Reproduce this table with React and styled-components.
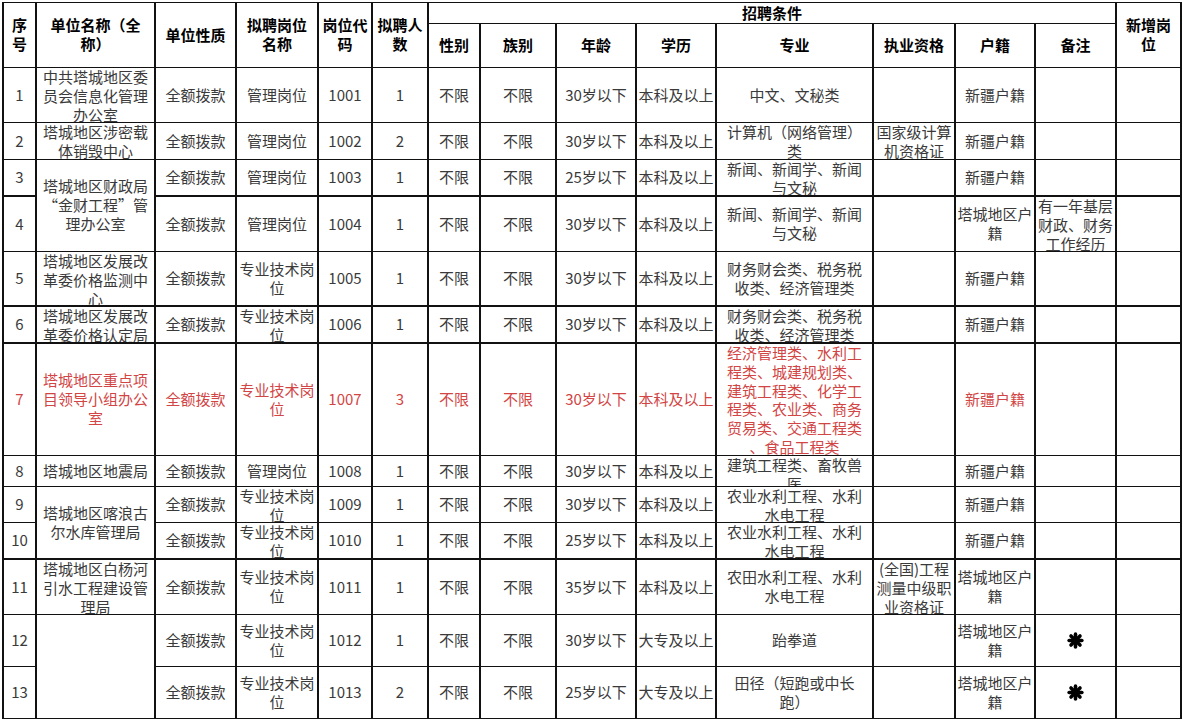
import React from 'react';
import styled, { createGlobalStyle } from 'styled-components';

const GlobalStyle = createGlobalStyle`
    html, body {
        margin: 0;
        padding: 0;
        background: #fff;
    }
    body {
        font-family: "Noto Sans CJK SC", "Liberation Sans", sans-serif;
    }
`;

const COLS = [33, 119, 81, 82, 54, 56, 52, 76, 80, 80, 157, 82, 80, 81, 65];
const ROWS = [21, 44, 55, 37, 37, 55, 55, 37, 112, 31, 36, 37, 55, 52, 52];

const Page = styled.div`
    padding: 2px 0 0 2px;
    width: 1183px;
    height: 721px;
    box-sizing: border-box;
    overflow: hidden;
`;

const Sheet = styled.div`
    display: grid;
    grid-template-columns: ${COLS.map((w) => `${w}px`).join(' ')};
    grid-template-rows: ${ROWS.map((h) => `${h}px`).join(' ')};
    width: max-content;
    border-top: 1px solid #111;
    border-left: 2px solid #111;
`;

const Cell = styled.div`
    grid-column: span ${(p) => p.$span || 1};
    grid-row: span ${(p) => p.$rows || 1};
    box-sizing: border-box;
    border-right: 2px solid #111;
    border-bottom: ${(p) => (p.$thick ? 2 : 1)}px solid #111;
    overflow: hidden;
    display: flex;
    justify-content: center;
    align-items: center;
    align-items: safe center;
    font-size: 15px;
    line-height: 18.8px;
    font-weight: ${(p) => (p.$head ? 700 : 400)};
    color: ${(p) => (p.$head ? '#000' : p.$red ? '#d24545' : '#3a3a3a')};
`;

const Text = styled.span`
    display: block;
    white-space: pre;
    text-align: center;
`;

const Star = styled.svg`
    width: 17px;
    height: 17px;
    display: block;
`;

const Asterisk = () => (
    <Star viewBox="0 0 20 20">
        <g stroke="#000" strokeWidth="4.2" strokeLinecap="round">
            <line x1="10" y1="2.5" x2="10" y2="17.5" />
            <line x1="2.5" y1="10" x2="17.5" y2="10" />
            <line x1="4.7" y1="4.7" x2="15.3" y2="15.3" />
            <line x1="15.3" y1="4.7" x2="4.7" y2="15.3" />
        </g>
    </Star>
);

const head = [
    { t: '序\n号', rows: 2 },
    { t: '单位名称（全\n称）', rows: 2 },
    { t: '单位性质', rows: 2 },
    { t: '拟聘岗位\n名称', rows: 2 },
    { t: '岗位代\n码', rows: 2 },
    { t: '拟聘人\n数', rows: 2 },
    { t: '招聘条件', span: 8 },
    { t: '新增岗\n位', rows: 2 },
    { t: '性别' },
    { t: '族别' },
    { t: '年龄' },
    { t: '学历' },
    { t: '专业' },
    { t: '执业资格' },
    { t: '户籍' },
    { t: '备注' },
];

const STAR = { star: true };

// each row: cells in order; an object with rows:2 spans down into the next row
const body = [
    { cells: ['1', '中共塔城地区委\n员会信息化管理\n办公室', '全额拨款', '管理岗位', '1001', '1', '不限', '不限', '30岁以下', '本科及以上', '中文、文秘类', '', '新疆户籍', '', ''] },
    { cells: ['2', '塔城地区涉密载\n体销毁中心', '全额拨款', '管理岗位', '1002', '2', '不限', '不限', '30岁以下', '本科及以上', '计算机（网络管理）\n类', '国家级计算\n机资格证', '新疆户籍', '', ''] },
    { thick: true, cells: ['3', { t: '塔城地区财政局\n“金财工程”管\n理办公室', rows: 2 }, '全额拨款', '管理岗位', '1003', '1', '不限', '不限', '25岁以下', '本科及以上', '新闻、新闻学、新闻\n与文秘', '', '新疆户籍', '', ''] },
    { cells: ['4', '全额拨款', '管理岗位', '1004', '1', '不限', '不限', '30岁以下', '本科及以上', '新闻、新闻学、新闻\n与文秘', '', '塔城地区户\n籍', '有一年基层\n财政、财务\n工作经历', ''] },
    { thick: true, cells: ['5', '塔城地区发展改\n革委价格监测中\n心', '全额拨款', '专业技术岗\n位', '1005', '1', '不限', '不限', '30岁以下', '本科及以上', '财务财会类、税务税\n收类、经济管理类', '', '新疆户籍', '', ''] },
    { thick: true, cells: ['6', '塔城地区发展改\n革委价格认定局', '全额拨款', '专业技术岗\n位', '1006', '1', '不限', '不限', '30岁以下', '本科及以上', '财务财会类、税务税\n收类、经济管理类', '', '新疆户籍', '', ''] },
    { red: true, cells: ['7', '塔城地区重点项\n目领导小组办公\n室', '全额拨款', '专业技术岗\n位', '1007', '3', '不限', '不限', '30岁以下', '本科及以上', '经济管理类、水利工\n程类、城建规划类、\n建筑工程类、化学工\n程类、农业类、商务\n贸易类、交通工程类\n、食品工程类', '', '新疆户籍', '', ''] },
    { cells: ['8', '塔城地区地震局', '全额拨款', '管理岗位', '1008', '1', '不限', '不限', '30岁以下', '本科及以上', '建筑工程类、畜牧兽\n医', '', '新疆户籍', '', ''] },
    { cells: ['9', { t: '塔城地区喀浪古\n尔水库管理局', rows: 2, thick: true }, '全额拨款', '专业技术岗\n位', '1009', '1', '不限', '不限', '30岁以下', '本科及以上', '农业水利工程、水利\n水电工程', '', '新疆户籍', '', ''] },
    { thick: true, cells: ['10', '全额拨款', '专业技术岗\n位', '1010', '1', '不限', '不限', '25岁以下', '本科及以上', '农业水利工程、水利\n水电工程', '', '新疆户籍', '', ''] },
    { cells: ['11', '塔城地区白杨河\n引水工程建设管\n理局', '全额拨款', '专业技术岗\n位', '1011', '1', '不限', '不限', '35岁以下', '本科及以上', '农田水利工程、水利\n水电工程', '(全国)工程\n测量中级职\n业资格证', '塔城地区户\n籍', '', ''] },
    { cells: ['12', { t: '', rows: 2 }, '全额拨款', '专业技术岗\n位', '1012', '1', '不限', '不限', '30岁以下', '大专及以上', '跆拳道', '', '塔城地区户\n籍', STAR, ''] },
    { cells: ['13', '全额拨款', '专业技术岗\n位', '1013', '2', '不限', '不限', '25岁以下', '大专及以上', '田径（短跑或中长\n跑）', '', '塔城地区户\n籍', STAR, ''] },
];

const App = () => (
    <Page>
        <GlobalStyle />
        <Sheet>
            {head.map((c, i) => (
                <Cell key={`h${i}`} $head $span={c.span} $rows={c.rows}>
                    <Text>{c.t}</Text>
                </Cell>
            ))}
            {body.map((row, r) =>
                row.cells.map((c, i) => {
                    const cell = typeof c === 'string' ? { t: c } : c;
                    const thick = cell.rows ? cell.thick : row.thick;
                    return (
                        <Cell key={`r${r}c${i}`} $rows={cell.rows} $red={row.red} $thick={thick}>
                            {cell.star ? <Asterisk /> : <Text>{cell.t}</Text>}
                        </Cell>
                    );
                })
            )}
        </Sheet>
    </Page>
);

export default App;
